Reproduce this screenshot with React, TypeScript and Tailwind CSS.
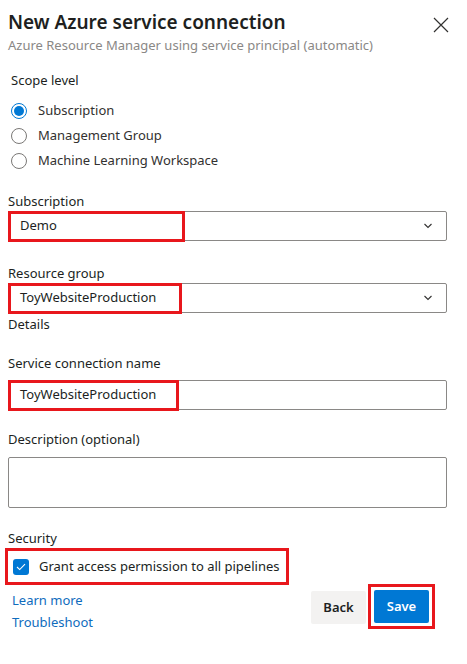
import type { ReactNode } from 'react'

const font = { fontFamily: '"Noto Sans", "Open Sans", sans-serif' }

function Chevron() {
  return (
    <svg width="10" height="6" viewBox="0 0 10 6" className="text-[#323130]">
      <path d="M1.5 1 L5 4.5 L8.5 1" fill="none" stroke="currentColor" strokeWidth="1.1" />
    </svg>
  )
}

function Field({
  value,
  redWidth,
  dropdown,
  className = '',
}: {
  value: string
  redWidth: number
  dropdown?: boolean
  className?: string
}) {
  return (
    <div
      className={`relative flex h-[30px] items-center rounded-[2px] border border-[#8a8886] pl-[11px] pr-[13px] ${className}`.trim()}
    >
      <span className="flex-1 text-[13px] text-[#201f1e]">{value}</span>
      {dropdown && <Chevron />}
      <div
        className="pointer-events-none absolute -left-px -top-px h-[31px] border-[3px] border-[#e8171c]"
        style={{ width: redWidth }}
      />
    </div>
  )
}

function Label({ children, className = '' }: { children: ReactNode; className?: string }) {
  return <div className={`text-[13px] leading-[20px] text-[#201f1e] ${className}`.trim()}>{children}</div>
}

function Radio({ label, checked }: { label: string; checked?: boolean }) {
  return (
    <div className="flex h-[25px] items-center gap-[11px] pl-[3px]">
      {checked ? (
        <span className="flex h-[16px] w-[16px] items-center justify-center rounded-full border-[1.5px] border-[#0078d4]">
          <span className="h-[10px] w-[10px] rounded-full bg-[#0078d4]" />
        </span>
      ) : (
        <span className="h-[16px] w-[16px] rounded-full border border-[#7a7876]" />
      )}
      <span className="text-[13px] text-[#323130]">{label}</span>
    </div>
  )
}

export default function App() {
  return (
    <div className="h-[664px] w-[467px] bg-white" style={font}>
      <div className="pl-[8px] pr-[20px] pt-[8px]">
        <div className="flex items-start justify-between">
          <div>
            <h1 className="text-[19px] font-semibold leading-[28px] text-[#201f1e]">New Azure service connection</h1>
            <div className="text-[13px] leading-[18px] text-[#8a8886]">
              Azure Resource Manager using service principal (automatic)
            </div>
          </div>
          <svg width="16" height="16" viewBox="0 0 16 16" className="mr-[-2px] mt-[9px] text-[#323130]">
            <path d="M1 1 L15 15 M15 1 L1 15" stroke="currentColor" strokeWidth="1.2" />
          </svg>
        </div>

        <Label className="ml-[3px] mt-[16px]">Scope level</Label>
        <div className="mt-[8px]">
          <Radio label="Subscription" checked />
          <Radio label="Management Group" />
          <Radio label="Machine Learning Workspace" />
        </div>

        <Label className="mt-[18px]">Subscription</Label>
        <Field value="Demo" redWidth={177} dropdown />

        <Label className="mt-[22px] leading-[18px]">Resource group</Label>
        <Field value="ToyWebsiteProduction" redWidth={174} dropdown />
        <Label className="mt-px">Details</Label>

        <Label className="mt-[19px]">Service connection name</Label>
        <Field value="ToyWebsiteProduction" redWidth={171} className="mt-[7px]" />

        <Label className="mt-[19px]">Description (optional)</Label>
        <div className="mt-[8px] h-[51px] rounded-[2px] border border-[#8a8886]" />

        <Label className="mt-[20px]">Security</Label>
      </div>

      <div className="ml-[5px] flex h-[37px] w-[284px] items-center gap-[10px] border-[3px] border-[#e8171c] pl-[5px]">
        <span className="flex h-[16px] w-[16px] items-center justify-center rounded-[3px] bg-[#0078d4]">
          <svg width="10" height="8" viewBox="0 0 10 8">
            <path d="M1 4 L3.7 6.6 L9 1.2" fill="none" stroke="white" strokeWidth="1.1" />
          </svg>
        </span>
        <span className="text-[13px] text-[#201f1e]">Grant access permission to all pipelines</span>
      </div>

      <div className="-mt-px flex items-start justify-between pl-[12px] pr-[32px]">
        <div className="mt-[6px] flex flex-col gap-[2px] text-[13px] leading-[20px] text-[#0f6cbd]">
          <span>Learn more</span>
          <span>Troubleshoot</span>
        </div>
        <div className="flex items-start gap-[2px]">
          <button className="mt-[7px] h-[33px] w-[55px] rounded-[2px] bg-[#f3f2f1] text-[13px] font-semibold text-[#201f1e]">
            Back
          </button>
          <div className="border-[3px] border-[#e8171c] p-[3px]">
            <button className="h-[33px] w-[55px] rounded-[2px] bg-[#0078d4] text-[13px] font-semibold text-white">
              Save
            </button>
          </div>
        </div>
      </div>
    </div>
  )
}
